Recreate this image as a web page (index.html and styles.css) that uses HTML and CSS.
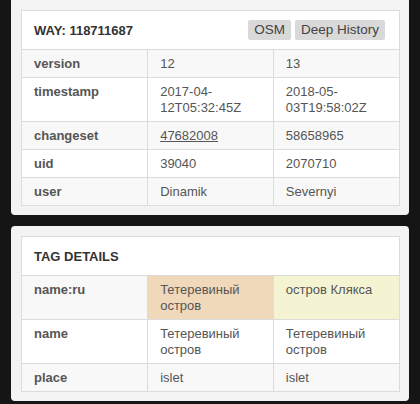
FILE: index.html
```html
<!DOCTYPE html>
<html>
<head>
<meta charset="utf-8">
<link rel="stylesheet" href="styles.css">
</head>
<body>
<div class="page">
  <section class="card card-top">
    <div class="panel">
      <div class="panel-head">
        <span class="title">WAY: 118711687</span>
        <div class="btns">
          <span class="btn">OSM</span>
          <span class="btn">Deep History</span>
        </div>
      </div>
      <table class="grid">
        <tr><th>version</th><td>12</td><td>13</td></tr>
        <tr><th>timestamp</th><td>2017-04-12T05:32:45Z</td><td>2018-05-03T19:58:02Z</td></tr>
        <tr><th>changeset</th><td><a class="link">47682008</a></td><td>58658965</td></tr>
        <tr><th>uid</th><td>39040</td><td>2070710</td></tr>
        <tr><th>user</th><td>Dinamik</td><td>Severnyi</td></tr>
      </table>
    </div>
  </section>
  <section class="card card-bottom">
    <div class="panel">
      <div class="panel-head">
        <span class="title">TAG DETAILS</span>
      </div>
      <table class="grid">
        <tr><th>name:ru</th><td class="old">Тетеревиный остров</td><td class="new">остров Клякса</td></tr>
        <tr><th>name</th><td>Тетеревиный остров</td><td>Тетеревиный остров</td></tr>
        <tr><th>place</th><td>islet</td><td>islet</td></tr>
      </table>
    </div>
  </section>
</div>
</body>
</html>
```
FILE: styles.css
```css
html, body {
  margin: 0;
  padding: 0;
  background: #151515;
  font-family: "Liberation Sans", Arial, sans-serif;
  font-size: 13px;
  color: #555;
}
.page {
  width: 420px;
  height: 404px;
  overflow: hidden;
  display: flex;
  flex-direction: column;
  gap: 11px;
}
.card {
  margin: 0 11px;
  background: #f3f3f3;
  border-radius: 4px;
  padding: 10px 9px 9px 10px;
}
.card-top {
  margin-top: -10px;
  padding-top: 20px;
}
.panel {
  background: #fff;
  border: 1px solid #dcdcdc;
}
.panel-head {
  height: 38px;
  display: flex;
  align-items: center;
  justify-content: space-between;
  padding: 0 14px 0 12px;
  border-bottom: 1px solid #dcdcdc;
}
.title {
  font-weight: bold;
  color: #333;
  font-size: 13px;
}
.btns {
  display: flex;
  gap: 4px;
}
.btn {
  background: #d9d9d9;
  color: #444;
  border-radius: 2px;
  height: 20px;
  line-height: 20px;
  padding: 0 6px;
  font-size: 13.5px;
}
.grid {
  width: 100%;
  border-collapse: collapse;
  table-layout: fixed;
}
.grid th, .grid td {
  text-align: left;
  vertical-align: top;
  padding: 6px 12px 5px 12px;
  line-height: 16px;
  border-top: 1px solid #dcdcdc;
}
.grid tr:first-child th, .grid tr:first-child td {
  border-top: none;
}
.grid td {
  border-left: 1px solid #dcdcdc;
}
.grid th {
  font-weight: bold;
  color: #555;
}
.grid tr:nth-child(odd) {
  background: #f8f8f8;
}
.grid td.old {
  background: #f0d9bb;
}
.grid td.new {
  background: #f4f4d2;
}
.link {
  color: #555;
  text-decoration: underline;
}
```
